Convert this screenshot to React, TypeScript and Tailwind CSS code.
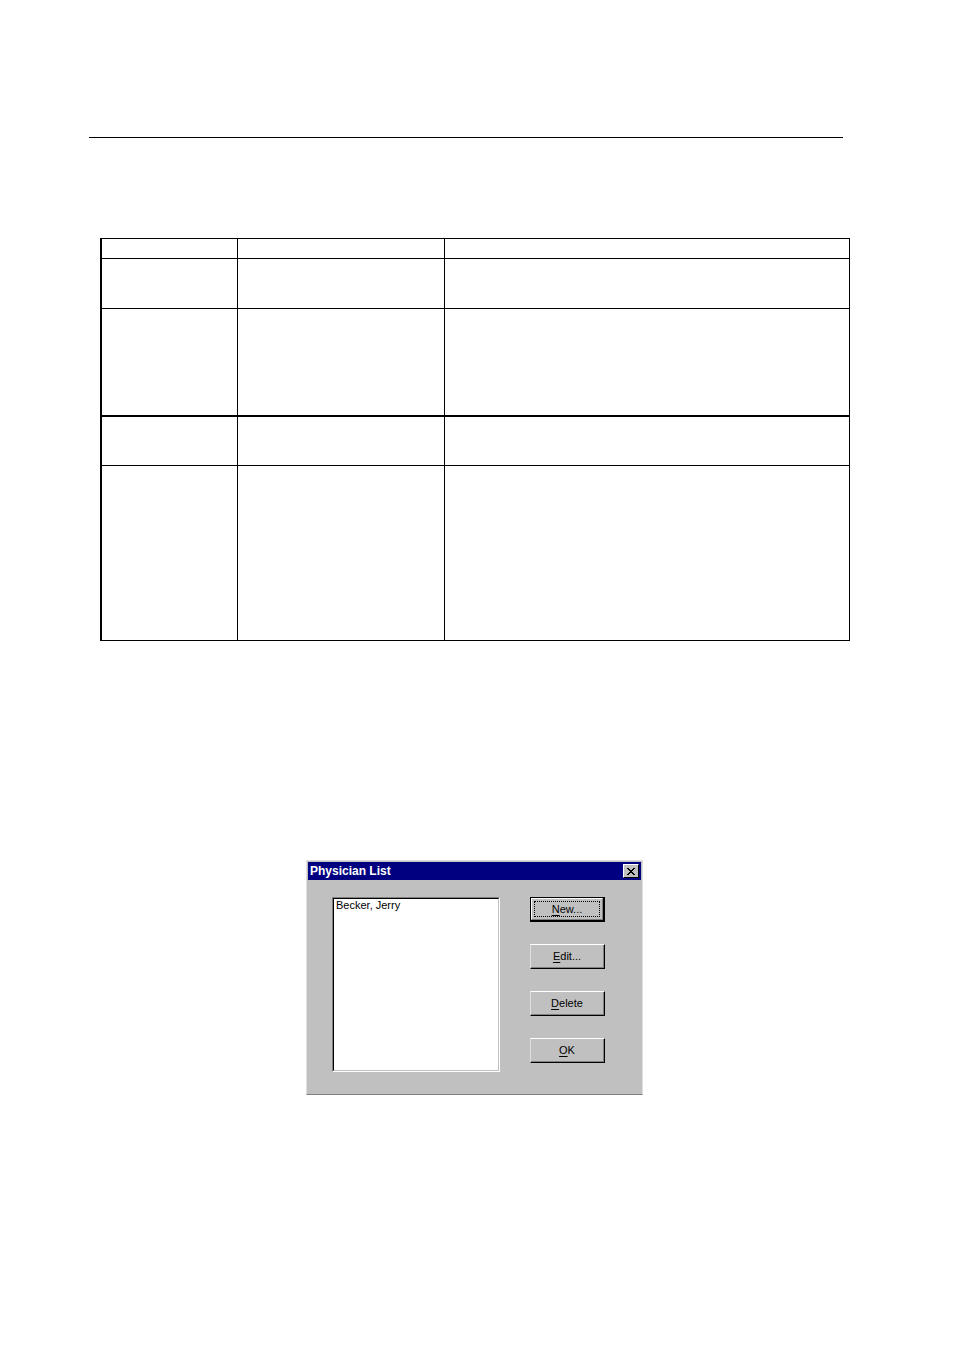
import React, { useState } from 'react';

const ROWS = [
  'h-[20px] border-b',
  'h-[50px] border-b',
  'h-[108px] border-b-2',
  'h-[49px] border-b',
  'h-[175px] border-b',
];

const BUTTONS = [
  { mnemonic: 'N', rest: 'ew...', isDefault: true },
  { mnemonic: 'E', rest: 'dit...', isDefault: false },
  { mnemonic: 'D', rest: 'elete', isDefault: false },
  { mnemonic: 'O', rest: 'K', isDefault: false },
];

function DialogButton({ mnemonic, rest, isDefault }: { mnemonic: string; rest: string; isDefault: boolean }) {
  const label = (
    <span>
      <span className="underline underline-offset-2">{mnemonic}</span>
      {rest}
    </span>
  );

  if (isDefault) {
    return (
      <button type="button" className="h-[25px] w-full border border-r-2 border-b-2 border-black bg-[#c0c0c0]">
        <span className="flex h-full border border-t-white border-l-white border-r-[#808080] border-b-[#808080] p-[2px]">
          <span className="flex flex-1 items-center justify-center border border-dotted border-black">{label}</span>
        </span>
      </button>
    );
  }

  return (
    <button type="button" className="h-[25px] w-full border border-t-white border-l-[#dfdfdf] border-r-black border-b-black bg-[#c0c0c0]">
      <span className="flex h-full items-center justify-center border-r border-b border-[#808080]">{label}</span>
    </button>
  );
}

function PhysicianDialog() {
  const [selected, setSelected] = useState<string[]>([]);

  return (
    <section
      role="dialog"
      aria-labelledby="dialog-title"
      className="w-[337px] border border-t-[#dfdfdf] border-l-[#dfdfdf] border-r-[#dfdfdf] border-b-[#808080] bg-[#c0c0c0] font-['Liberation_Sans',Arial,sans-serif] text-[11px] leading-[13px] text-black"
    >
      {/* Title bar */}
      <header className="mx-px mt-px flex h-[18px] items-center justify-between bg-[#000080] pr-[2px] pl-[2px]">
        <h1 id="dialog-title" className="text-[12px] font-bold text-white">Physician List</h1>
        <button
          type="button"
          aria-label="Close"
          className="flex h-[14px] w-[16px] items-center justify-center border border-t-white border-l-white border-r-black border-b-black bg-[#c0c0c0]"
        >
          <svg width="8" height="7" viewBox="0 0 8 7" shapeRendering="crispEdges" aria-hidden="true">
            <path d="M0 0h2v1h1v1h2v-1h1v-1h2v1h-1v1h-1v1h-1v1h1v1h1v1h1v1h-2v-1h-1v-1h-2v1h-1v1h-2v-1h1v-1h1v-1h1v-1h-1v-1h-1v-1h-1z" fill="#000" />
          </svg>
        </button>
      </header>

      <div className="flex items-start gap-[30px] pt-[17px] pr-[37px] pb-[22px] pl-[25px]">
        <div className="h-[175px] flex-1 border border-t-[#808080] border-l-[#808080] border-r-white border-b-white">
          <select
            multiple
            aria-label="Physicians"
            value={selected}
            onChange={(e) => setSelected(Array.from(e.target.selectedOptions, (o) => o.value).slice(-1))}
            className="block h-full w-full appearance-none overflow-hidden border border-t-black border-l-black border-r-[#c0c0c0] border-b-[#c0c0c0] bg-white outline-none"
          >
            <option value="becker" className="px-[2px] pb-px">Becker, Jerry</option>
          </select>
        </div>
        <div className="flex w-[75px] flex-col gap-[22px]">
          {BUTTONS.map((b) => (
            <DialogButton key={b.mnemonic} {...b} />
          ))}
        </div>
      </div>
    </section>
  );
}

export default function App() {
  return (
    <main className="min-h-screen bg-white pt-[137px] pb-[256px]">
      <hr className="mr-[111px] ml-[89px] border-t border-black" />

      <div className="mt-[100px] mr-[104px] ml-[100px]">
        <table className="w-full table-fixed border-separate border-spacing-0 border-t border-l-2 border-black">
          <colgroup>
            <col className="w-[136px]" />
            <col className="w-[207px]" />
            <col />
          </colgroup>
          <tbody>
            {ROWS.map((row) => (
              <tr key={row}>
                <td className={`border-r border-black p-0 ${row}`} />
                <td className={`border-r border-black p-0 ${row}`} />
                <td className={`border-r border-black p-0 ${row}`} />
              </tr>
            ))}
          </tbody>
        </table>
      </div>

      <div className="mt-[219px] flex justify-center pr-[5px]">
        <PhysicianDialog />
      </div>
    </main>
  );
}
